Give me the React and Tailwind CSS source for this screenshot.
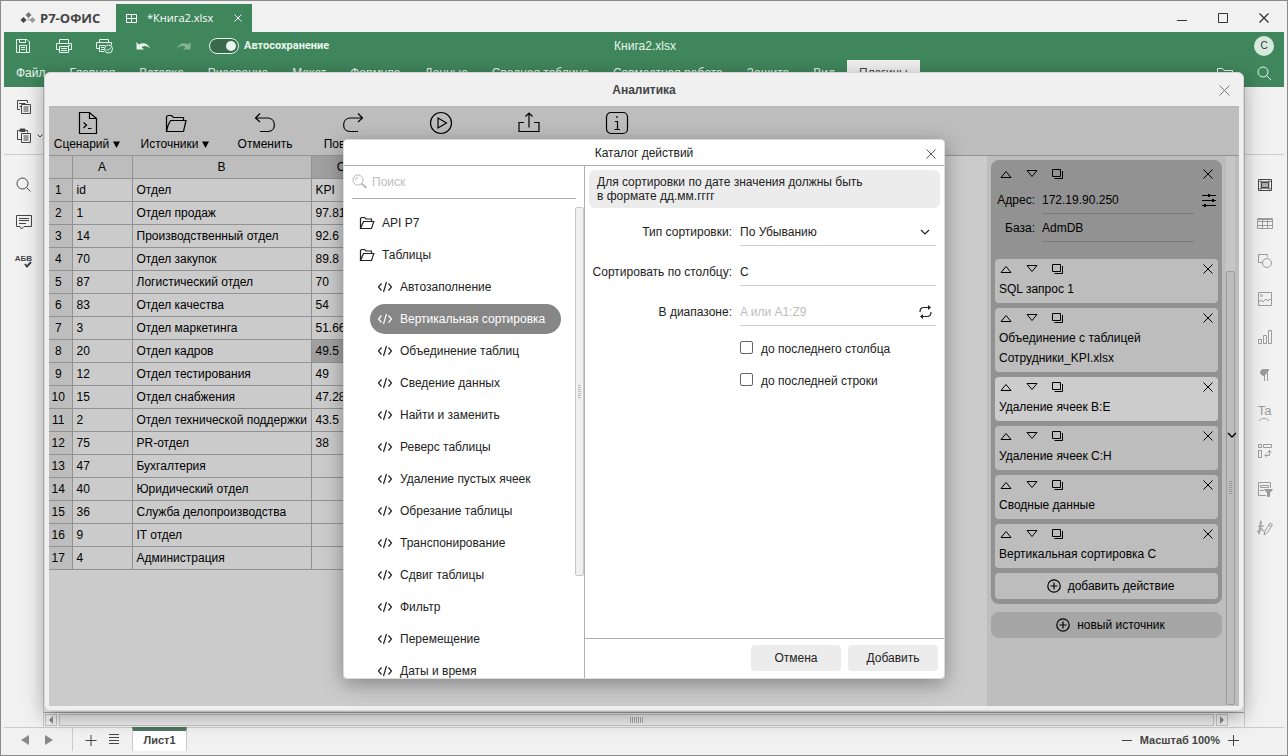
import { useState } from 'react';

const MENU_TABS = [
	'Файл',
	'Главная',
	'Вставка',
	'Рисование',
	'Макет',
	'Формула',
	'Данные',
	'Сводная таблица',
	'Совместная работа',
	'Защита',
	'Вид',
];

const ROWS = [
	['id', 'Отдел', 'KPI'],
	['1', 'Отдел продаж', '97.81'],
	['14', 'Производственный отдел', '92.6'],
	['70', 'Отдел закупок', '89.8'],
	['87', 'Логистический отдел', '70'],
	['83', 'Отдел качества', '54'],
	['3', 'Отдел маркетинга', '51.66'],
	['20', 'Отдел кадров', '49.5'],
	['12', 'Отдел тестирования', '49'],
	['15', 'Отдел снабжения', '47.28'],
	['2', 'Отдел технической поддержки', '43.5'],
	['75', 'PR-отдел', '38'],
	['47', 'Бухгалтерия', ''],
	['40', 'Юридический отдел', ''],
	['36', 'Служба делопроизводства', ''],
	['9', 'IT отдел', ''],
	['4', 'Администрация', ''],
];

const ACTIONS = [
	'Автозаполнение',
	'Вертикальная сортировка',
	'Объединение таблиц',
	'Сведение данных',
	'Найти и заменить',
	'Реверс таблицы',
	'Удаление пустых ячеек',
	'Обрезание таблицы',
	'Транспонирование',
	'Сдвиг таблицы',
	'Фильтр',
	'Перемещение',
	'Даты и время',
];

const STEPS = [
	{ title: 'SQL запрос 1' },
	{ title: 'Объединение с таблицей Сотрудники_KPI.xlsx' },
	{ title: 'Удаление ячеек B:E', light: true },
	{ title: 'Удаление ячеек C:H' },
	{ title: 'Сводные данные' },
	{ title: 'Вертикальная сортировка C' },
];

function Icon({ w = 16, h = w, sw = 1, className = '', children }) {
	return (
		<svg
			width={w}
			height={h}
			viewBox={`0 0 ${w} ${h}`}
			fill="none"
			stroke="currentColor"
			strokeWidth={sw}
			className={`shrink-0 ${className}`}
			aria-hidden="true"
		>
			{children}
		</svg>
	);
}

const CloseIcon = ({ size = 10, sw = 1, className }) => (
	<Icon w={size} sw={sw} className={className}>
		<path d={`M0.5 0.5L${size - 0.5} ${size - 0.5}M${size - 0.5} 0.5L0.5 ${size - 0.5}`} />
	</Icon>
);

const FolderIcon = () => (
	<Icon w={16} h={14} sw={1.2}>
		<path d="M1.5 12.5V2.5L2.5 1.5H5.5L7 3H12.5V5.5M1.5 12.5L4.5 5.5H14.8L12.5 12.5H1.5Z" />
	</Icon>
);

const CodeIcon = () => (
	<Icon w={16} h={12} sw={1.2}>
		<path d="M4.5 2.5L1.5 6L4.5 9.5M11.5 2.5L14.5 6L11.5 9.5M9.5 1L6.5 11" />
	</Icon>
);

const PlusCircleIcon = () => (
	<Icon w={14} sw={1.2}>
		<circle cx="7" cy="7" r="6.2" />
		<path d="M3.5 7H10.5M7 3.5V10.5" />
	</Icon>
);

const SearchIcon = ({ className }) => (
	<Icon w={16} className={className}>
		<circle cx="6" cy="6" r="5" />
		<path d="M3.5 6A2.5 2.5 0 0 1 6 3.5" />
		<path d="M9.5 9.5L14.5 14" sw={1.5} strokeWidth="2" />
	</Icon>
);

function TitleBar() {
	return (
		<div className="flex h-[31px] shrink-0 items-end">
			<div className="flex h-7 w-28 items-center gap-1 pl-4 text-[#444]">
				<svg width="16" height="12" viewBox="0 0 16 12" aria-hidden="true">
					<path d="M8.5 0L11.5 3L8.5 6L5.5 3Z" fill="#777" />
					<path d="M3.5 5L6.5 8L3.5 11L0.5 8Z" fill="#444" />
					<path d="M12.5 5L15.5 8L12.5 11L9.5 8Z" fill="#999" />
					<path d="M8.5 6L10 7.5L8.5 9L7 7.5Z" fill="#bbb" />
				</svg>
				<span className="font-['Open_Sans','Noto_Sans',sans-serif] text-[13px] leading-4 font-bold">
					Р7-ОФИС
				</span>
			</div>
			<div className="flex h-7 w-[136px] items-center bg-[#40865c] px-2.5 text-white">
				<Icon w={11} h={9} className="mr-2.5">
					<path d="M0.5 0.5H10.5V8.5H0.5ZM5.5 0.5V8.5M0.5 4.5H10.5" />
				</Icon>
				<span className="flex-1 font-['Open_Sans','Noto_Sans',sans-serif] text-[11px]">
					*Книга2.xlsx
				</span>
				<button type="button" aria-label="Закрыть вкладку">
					<CloseIcon size={8} />
				</button>
			</div>
			<div className="flex h-7 flex-1 items-center justify-end gap-[31px] pr-[15px] text-[#333]">
				<button type="button" aria-label="Свернуть">
					<Icon w={10}>
						<path d="M0 7.5H10" />
					</Icon>
				</button>
				<button type="button" aria-label="Развернуть">
					<Icon w={10}>
						<path d="M0.5 0.5H9.5V9.5H0.5Z" />
					</Icon>
				</button>
				<button type="button" aria-label="Закрыть">
					<CloseIcon sw={1.3} />
				</button>
			</div>
		</div>
	);
}

function Header() {
	return (
		<header className="shrink-0 bg-[#40865c] text-[#e8f5ec]">
			<div className="flex h-7 items-center pr-2.5 pl-3">
				<div className="flex flex-1 items-center">
					<button type="button" aria-label="Сохранить" className="w-10">
						<Icon w={14}>
							<path d="M0.5 0.5H11L13.5 3V13.5H0.5ZM3.5 13.5V6.5H10.5V13.5M3.5 0.5V3.5H9.5V0.5M5 8.5H9M5 10.5H9" />
						</Icon>
					</button>
					<button type="button" aria-label="Печать" className="w-10">
						<Icon w={16} h={14}>
							<path d="M3.5 4V0.5H12.5V4M3.5 10.5H0.5V4.5H15.5V10.5H12.5M3.5 7.5H12.5V13.5H3.5ZM12 6.5H14M5 9.5H11M5 11.5H11" />
						</Icon>
					</button>
					<button type="button" aria-label="Быстрая печать" className="w-10">
						<Icon w={18} h={16}>
							<path d="M3.5 4V1.5H12.5V4M3.5 10.5H0.5V4.5H15.5V7M3.5 13.5V7.5H9M3.5 13.5H8M5 9.5H8M5 11.5H8" />
							<circle cx="12.5" cy="11" r="4" />
							<path d="M10.5 11L12 12.5L15 9.5" />
						</Icon>
					</button>
					<button type="button" aria-label="Отменить" className="w-10">
						<Icon w={15} h={10} sw={0}>
							<path
								d="M0.5 1V8.5H8L5.5 6C8 4.5 11.5 4.5 14.5 8C12.5 2.5 7 1 3 3.5Z"
								fill="currentColor"
							/>
						</Icon>
					</button>
					<button type="button" aria-label="Повторить" className="w-[33px] opacity-40">
						<Icon w={15} h={10} sw={0}>
							<path
								d="M14.5 1V8.5H7L9.5 6C7 4.5 3.5 4.5 0.5 8C2.5 2.5 8 1 12 3.5Z"
								fill="currentColor"
							/>
						</Icon>
					</button>
					<label className="flex items-center gap-[5px] font-[Roboto,sans-serif] text-[11px] leading-4 font-bold">
						<input type="checkbox" defaultChecked className="peer sr-only" />
						<span className="flex h-4 w-[30px] items-center justify-end rounded-full border border-[#e8f5ec] bg-[#376b4b] px-0.5">
							<span className="size-2.5 rounded-full bg-[#e8f5ec]" />
						</span>
						Автосохранение
					</label>
				</div>
				<span className="text-xs">Книга2.xlsx</span>
				<div className="flex flex-1 justify-end">
					<button
						type="button"
						aria-label="Профиль"
						className="size-5 rounded-full bg-[#d5eadd] text-[10px] text-[#333]"
					>
						С
					</button>
				</div>
			</div>
			<div className="flex h-[27px] pr-3 pl-3 text-xs">
				<nav className="flex flex-1 items-center gap-6">
					{MENU_TABS.map((tab) => (
						<button key={tab} type="button" className="pb-0.5">
							{tab}
						</button>
					))}
					<button
						type="button"
						className="-ml-3 h-full bg-[#f1f1f1] px-3 pb-0.5 text-[#444]"
					>
						Плагины
					</button>
				</nav>
				<div className="flex items-center gap-6">
					<Icon w={16} h={12}>
						<path d="M0.5 11.5V0.5H5.5L7 2.5H15.5V11.5Z" />
					</Icon>
					<button type="button" aria-label="Поиск">
						<Icon w={15}>
							<circle cx="6" cy="6" r="5" />
							<path d="M9.5 9.5L14 14" />
						</Icon>
					</button>
				</div>
			</div>
		</header>
	);
}

function LeftRail() {
	return (
		<aside className="flex w-10 shrink-0 flex-col border-r border-[#cbcbcb] text-[#444]">
			<div className="flex h-17 flex-col gap-3 border-b border-[#cbcbcb] pt-[13px] pl-[13px]">
				<Icon w={15} h={16}>
					<path d="M3 9.5H0.5V0.5H10.5V3M2.5 3.5H4M2.5 6.5H4M2 3.5H8.5M4.5 4.5H13.5V13.5H4.5ZM6.5 7H11.5M6.5 9H11.5M6.5 11H11.5" />
				</Icon>
				<div className="flex items-center gap-1">
					<Icon w={16}>
						<path d="M4 11.5H0.5V2.5H2.5M8.5 2.5H10.5V4.5" />
						<path d="M3 1H8V3.5H3Z" fill="currentColor" />
						<path d="M4.5 5.5H13.5V14.5H4.5ZM6.5 8H11.5M6.5 10H11.5M6.5 12H11.5" />
					</Icon>
					<Icon w={6} h={4}>
						<path d="M0.5 0.5L3 3L5.5 0.5" />
					</Icon>
				</div>
			</div>
			<div className="flex flex-col items-center gap-[23px] pt-[22px]">
				<Icon w={15}>
					<circle cx="6.5" cy="6.5" r="5.5" />
					<path d="M10.5 10.5L14.5 14.5" />
				</Icon>
				<Icon w={16} h={15}>
					<path d="M0.5 0.5H15.5V11.5H8L5.5 14L4 11.5H0.5ZM3 3.5H13M3 5.5H13M3 8.5H10" />
				</Icon>
				<div className="relative">
					<span className="block text-[8px] leading-3 font-bold">АБВ</span>
					<Icon w={8} h={7} sw={2} className="absolute top-2 right-0">
						<path d="M1 3L3 5.5L7 1" />
					</Icon>
				</div>
			</div>
		</aside>
	);
}

function RightRail() {
	return (
		<aside className="flex w-10 shrink-0 flex-col border-l border-[#cbcbcb] text-[#9b9b9b]">
			<div className="h-17 border-b border-[#cbcbcb]" />
			<div className="flex flex-col items-center gap-[22px] pt-[22px]">
				<Icon w={16} className="text-[#444]">
					<path d="M1.5 2.5H14.5V13.5H1.5Z" />
					<path d="M1.5 4.5H14.5M1.5 11.5H14.5M4 2.5V13.5M12 2.5V13.5" opacity="0.6" />
					<path d="M4.5 5.5H11.5V10.5H4.5Z" fill="#aaa" />
				</Icon>
				<Icon w={16}>
					<path d="M0.5 3.5H15.5V13.5H0.5ZM0.5 6.5H15.5M0.5 10.5H15.5M5.5 3.5V13.5M10.5 3.5V13.5M0.5 4.5H15.5" />
				</Icon>
				<Icon w={16}>
					<path d="M5 9.5H1.5V1.5H10.5V4" />
					<circle cx="10" cy="10" r="4.5" />
				</Icon>
				<Icon w={16}>
					<path d="M1.5 1.5H14.5V14.5H1.5ZM1.5 11L4 9L6 11L9 8L11 10L13 8L14.5 9.5" />
					<circle cx="4.5" cy="4.5" r="1" />
				</Icon>
				<Icon w={16}>
					<path d="M1.5 10.5H4.5V14.5H1.5ZM6.5 6.5H9.5V14.5H6.5ZM11.5 1.5H14.5V14.5H11.5Z" />
				</Icon>
				<Icon w={16}>
					<path d="M12 2.5H7C4 2.5 3.5 4 3.5 5.5C3.5 7 5 8.5 7.5 8.5Z" fill="currentColor" />
					<path d="M7.5 2.5V14M10.5 2.5V14" />
				</Icon>
				<div className="flex h-4 flex-col items-center">
					<span className="text-[13px] leading-3">Ta</span>
					<Icon w={12} h={4}>
						<path d="M1 4C3.5 0.5 8.5 0.5 11 4" />
					</Icon>
				</div>
				<Icon w={16}>
					<path d="M1.5 1.5H4.5V4.5H1.5ZM6.5 1.5H14.5V4.5H6.5ZM1.5 7.5H4.5V14.5H1.5Z" />
					<path d="M8 12.5H12.5V7.5M10 10.5L8 12.5L10 14.5M10.5 9.5L12.5 7.5L14.5 9.5" />
				</Icon>
				<Icon w={16}>
					<path d="M9 14.5H1.5V1.5H13.5V7M3.5 4.5H11.5V6.5H3.5ZM3 9.5H7" />
					<path d="M7.5 8.5H15.5L12.5 12V15.5H10.5V12Z" fill="currentColor" />
				</Icon>
				<Icon w={18} h={17}>
					<path d="M1 12C4 14 4 3 4.5 2C6 0 5 9 4 13C3 17 1.5 14 3 12C5 9 7 9 6.5 11C6 13 8 12 8 11M2 7C4 8 7 7 8 7" />
					<path d="M8 16L9 12L14 4L16.5 5.5L11.5 13.5ZM13 6L15.5 7.5" />
				</Icon>
			</div>
		</aside>
	);
}

function Workspace() {
	return (
		<div className="flex min-h-0 flex-1">
			<LeftRail />
			<div className="flex min-w-0 flex-1 flex-col justify-end">
				<div className="h-1 border-b border-[#a5a5a5]" />
				<div className="flex h-[14px] items-center justify-between gap-0.5 pr-4 pl-px text-[#888]">
					<button
						type="button"
						aria-label="Прокрутить влево"
						className="flex size-3 items-center justify-center border border-[#c4c4c4]"
					>
						<Icon w={4} h={8} sw={0}>
							<path d="M4 0V8L0 4Z" fill="currentColor" />
						</Icon>
					</button>
					<div className="flex h-3 flex-1 items-center justify-center gap-px border border-[#c4c4c4] bg-[#ededed]">
						<Icon w={14} h={6} className="text-[#aaa]">
							<path d="M0.5 0V6M2.5 0V6M4.5 0V6M6.5 0V6M8.5 0V6M10.5 0V6M12.5 0V6" />
						</Icon>
					</div>
					<button
						type="button"
						aria-label="Прокрутить вправо"
						className="flex size-3 items-center justify-center border border-[#c4c4c4]"
					>
						<Icon w={4} h={8} sw={0}>
							<path d="M0 0V8L4 4Z" fill="currentColor" />
						</Icon>
					</button>
				</div>
			</div>
			<RightRail />
		</div>
	);
}

function StatusBar() {
	return (
		<footer className="flex h-7 shrink-0 items-stretch border-t border-[#cbcbcb] pb-1 text-[#444]">
			<div className="flex w-[69px] items-center gap-4 border-r border-[#cbcbcb] pl-[17px] text-[#888]">
				<button type="button" aria-label="Предыдущий лист">
					<Icon w={8} h={10} sw={0}>
						<path d="M8 0V10L0 5Z" fill="currentColor" />
					</Icon>
				</button>
				<button type="button" aria-label="Следующий лист">
					<Icon w={8} h={10} sw={0}>
						<path d="M0 0V10L8 5Z" fill="currentColor" />
					</Icon>
				</button>
			</div>
			<div className="flex w-[59px] items-center gap-3 pl-3">
				<button type="button" aria-label="Добавить лист">
					<Icon w={12}>
						<path d="M0.5 6.5H11.5M6 1V12" />
					</Icon>
				</button>
				<button type="button" aria-label="Список листов">
					<Icon w={10} h={11}>
						<path d="M0 0.5H10M0 3.5H10M0 6.5H10M0 9.5H10" />
					</Icon>
				</button>
			</div>
			<button
				type="button"
				className="-mt-px w-[55px] border-x border-t-4 border-x-[#cbcbcb] border-t-[#4d7660] bg-white pb-0.5 text-[11px] font-bold"
			>
				Лист1
			</button>
			<div className="flex flex-1 items-center justify-end gap-2 pr-[45px] text-[11px] font-bold">
				<button type="button" aria-label="Уменьшить">
					<Icon w={10} h={12}>
						<path d="M0 6.5H10" />
					</Icon>
				</button>
				<span>Масштаб 100%</span>
				<button type="button" aria-label="Увеличить">
					<Icon w={11} h={12}>
						<path d="M0 6.5H11M5.5 1V12" />
					</Icon>
				</button>
			</div>
		</footer>
	);
}

function ToolButton({ label, title, arrow, className = 'w-22', children }) {
	return (
		<button
			type="button"
			aria-label={title}
			className={`flex h-12 shrink-0 flex-col items-center whitespace-nowrap ${className}`}
		>
			<span className="flex h-[31px] items-center">
				<Icon w={24} sw={1.2}>
					{children}
				</Icon>
			</span>
			<span className="flex items-center gap-1 leading-3">
				{label}
				{arrow && (
					<Icon w={7} sw={0}>
						<path d="M0 0.5H7L3.5 7Z" fill="currentColor" />
					</Icon>
				)}
			</span>
		</button>
	);
}

function Toolbar() {
	return (
		<div className="flex h-12 shrink-0 bg-[#bdbdbd]">
			<ToolButton label="Сценарий" arrow className="mr-1 w-20 pr-1">
				<path d="M4.5 1.5H14.5L21.5 7.5V22.5H4.5ZM14.5 1.5V7.5H21.5M8.5 11.5L11.5 14L8.5 17M13 17.5H16.5" />
			</ToolButton>
			<ToolButton label="Источники" arrow className="w-22 pr-1">
				<path d="M3.5 20.5V5.5L5 4.5H8.5L10.5 6.5H20.5V9.5M3.5 20.5H20.5L23 9.5H7.5L5 14.5L3.5 20.5Z" />
			</ToolButton>
			<ToolButton label="Отменить">
				<path d="M7 2.5L2.5 7L7 11M2.5 7H15C23.5 7.5 23.5 20.5 15 20.5H7" />
			</ToolButton>
			<ToolButton label="Повторить">
				<path d="M17 2.5L21.5 7L17 11M21.5 7H9C0.5 7.5 0.5 20.5 9 20.5H17" />
			</ToolButton>
			<ToolButton title="Запустить">
				<circle cx="12" cy="12" r="10.5" />
				<path d="M9 7L17.5 12L9 17Z" />
			</ToolButton>
			<ToolButton title="Экспорт">
				<path d="M7 11.5H2V20.5H22V11.5H17M12 16.5V2M8.5 5.5L12 2L15.5 5.5" />
			</ToolButton>
			<ToolButton title="Справка">
				<rect x="1.5" y="1.5" width="21" height="21" rx="4.5" />
				<path d="M12 5V7M10 10.5H12.5V18.5M9.5 18.5H15" />
			</ToolButton>
		</div>
	);
}

function Sheet() {
	return (
		<table className="w-[322px] table-fixed border-collapse">
			<thead>
				<tr className="h-[22px] bg-[#bdbdbd]">
					<th className="w-[23px] border-r border-b border-[#929292]" />
					<th className="w-[60px] border border-t-0 border-[#929292] font-normal">A</th>
					<th className="w-[179px] border border-t-0 border-[#929292] font-normal">B</th>
					<th className="w-[60px] border border-t-0 border-[#929292] bg-[#a0a0a0] font-normal">
						C
					</th>
				</tr>
			</thead>
			<tbody>
				{ROWS.map((row, i) => (
					<tr key={row[0]} className="h-[23px]">
						<th
							scope="row"
							className="border-r border-b border-[#929292] bg-[#bdbdbd] p-0 pr-1 font-normal"
						>
							{i + 1}
						</th>
						{row.map((cell, j) => (
							<td
								key={j}
								className={`border border-[#929292] p-0 pl-1 whitespace-nowrap ${
									i === 7 && j === 2 ? 'bg-[#a0a0a0]' : ''
								}`}
							>
								{cell}
							</td>
						))}
					</tr>
				))}
			</tbody>
		</table>
	);
}

function StepControls({ name }) {
	return (
		<div className="flex h-5 items-center px-[5px]">
			<button type="button" aria-label={`Выше: ${name}`} className="w-[26px]">
				<Icon w={12} h={8}>
					<path d="M1 7.5L6 1.5L11 7.5Z" />
				</Icon>
			</button>
			<button type="button" aria-label={`Ниже: ${name}`} className="w-[26px]">
				<Icon w={12} h={8}>
					<path d="M1 0.5L6 6.5L11 0.5Z" />
				</Icon>
			</button>
			<button type="button" aria-label={`Копировать: ${name}`} className="flex-1">
				<Icon w={11} h={10}>
					<path d="M0.5 0.5H8.5V7.5H0.5ZM10.5 2V9.5H2.5" />
				</Icon>
			</button>
			<button type="button" aria-label={`Удалить: ${name}`}>
				<CloseIcon />
			</button>
		</div>
	);
}

function SourcePanel() {
	return (
		<aside className="flex w-[252px] shrink-0 bg-[#bdbdbd] pr-1">
			<div className="min-w-0 flex-1 pt-1 pl-1">
				<section className="rounded-lg bg-[#929292] px-1 pt-1 pb-[5px]">
					<StepControls name="источник" />
					<div className="flex h-8 items-center pr-0.5">
						<label htmlFor="address" className="w-10 text-right">
							Адрес:
						</label>
						<input
							id="address"
							defaultValue="172.19.90.250"
							className="mr-2 ml-[7px] h-[27px] w-0 flex-1 border-b border-[#7a7a7a] outline-none"
						/>
						<button type="button" aria-label="Параметры">
							<Icon w={14} sw={1.2}>
								<path d="M0 2.5H14M0 7.5H14M0 12.5H14" />
								<path d="M7 1V4M11 6V9M3 11V14" strokeWidth="2" />
							</Icon>
						</button>
					</div>
					<div className="flex h-6 items-center pr-[22px]">
						<label htmlFor="base" className="w-10 text-right">
							База:
						</label>
						<input
							id="base"
							defaultValue="AdmDB"
							className="mr-0.5 ml-[7px] h-[27px] w-0 flex-1 border-b border-[#7a7a7a] outline-none"
						/>
					</div>
					<div className="mt-[19px] flex flex-col gap-[5px]">
						{STEPS.map((step) => (
							<article
								key={step.title}
								className={`rounded pb-1 ${step.light ? 'bg-[#cccccc]' : 'bg-[#bdbdbd]'}`}
							>
								<StepControls name={step.title} />
								<p className="pr-12 pl-1 leading-5">{step.title}</p>
							</article>
						))}
						<button
							type="button"
							className="flex h-[26px] items-center justify-center gap-[7px] rounded bg-[#bdbdbd] pl-2"
						>
							<PlusCircleIcon />
							добавить действие
						</button>
					</div>
				</section>
				<button
					type="button"
					className="mt-2 flex h-[26px] w-full items-center justify-center gap-[7px] rounded-lg bg-[#a6a6a6] pl-2"
				>
					<PlusCircleIcon />
					новый источник
				</button>
			</div>
			<div className="ml-1 flex w-[9px] flex-col bg-[#c6c6c6] pt-[115px] pb-px">
				<div className="relative flex flex-1 items-center justify-center rounded-xs border border-[#9c9c9c] bg-[#bdbdbd]">
					<Icon w={3} h={14} className="text-[#999]">
						<path d="M0 0.5H3M0 2.5H3M0 4.5H3M0 6.5H3M0 8.5H3M0 10.5H3M0 12.5H3" />
					</Icon>
					<Icon w={10} h={6} sw={1.4} className="absolute top-[160px] left-0">
						<path d="M1 1L5 5L9 1" />
					</Icon>
				</div>
			</div>
		</aside>
	);
}

function AnalyticsWindow() {
	return (
		<section className="absolute inset-x-[43px] top-[71px] bottom-11 flex flex-col rounded-md border border-[#d5d5d5] bg-[#f0f0f0] px-1 pb-1 shadow-[0_5px_20px_rgba(0,0,0,0.35)]">
			<div className="flex h-[33px] shrink-0 items-center pt-px pr-[9px] pl-5">
				<h1 className="flex-1 text-center text-xs font-bold text-[#444]">Аналитика</h1>
				<button type="button" aria-label="Закрыть Аналитику" className="text-[#777]">
					<CloseIcon size={11} />
				</button>
			</div>
			<div className="flex min-h-0 flex-1 flex-col border-t border-[#b5b5b5] bg-[#cbcbcb] text-xs text-black">
				<Toolbar />
				<div className="flex min-h-0 flex-1 border-t border-[#929292]">
					<div className="min-w-0 flex-1 overflow-hidden">
						<Sheet />
					</div>
					<SourcePanel />
				</div>
			</div>
		</section>
	);
}

function ActionTree({ selected, onSelect }) {
	return (
		<div className="flex w-[241px] shrink-0 flex-col overflow-hidden border-r border-[#b0b0b0]">
			<div className="mx-2 flex h-[33px] shrink-0 items-center gap-1 border-b border-[#b0b0b0]">
				<SearchIcon className="text-[#bbb]" />
				<input
					type="search"
					aria-label="Поиск"
					placeholder="Поиск"
					className="min-w-0 flex-1 outline-none placeholder:text-[#bdbdbd]"
				/>
			</div>
			<div className="flex min-h-0 flex-1 pt-2">
				<div className="min-w-0 flex-1 overflow-hidden">
					{['API Р7', 'Таблицы'].map((folder) => (
						<button
							key={folder}
							type="button"
							className="flex h-8 w-full items-center gap-[7px] pl-[15px]"
						>
							<FolderIcon />
							{folder}
						</button>
					))}
					{ACTIONS.map((action) => (
						<div key={action} className="flex h-8 items-center pl-[26px]">
							<button
								type="button"
								onClick={() => onSelect(action)}
								className={`flex h-[30px] items-center gap-[7px] rounded-full pr-4 pl-[7px] whitespace-nowrap ${
									selected === action ? 'bg-[#868686] text-white' : ''
								}`}
							>
								<CodeIcon />
								{action}
							</button>
						</div>
					))}
				</div>
				<div className="flex h-[369px] w-[9px] shrink-0 items-center justify-center rounded-xs border border-[#c8c8c8] bg-[#f0f0f0]">
					<Icon w={3} h={14} className="text-[#bbb]">
						<path d="M0 0.5H3M0 2.5H3M0 4.5H3M0 6.5H3M0 8.5H3M0 10.5H3M0 12.5H3" />
					</Icon>
				</div>
			</div>
		</div>
	);
}

function ActionForm() {
	return (
		<form
			className="flex min-w-0 flex-1 flex-col"
			onSubmit={(e) => e.preventDefault()}
		>
			<div className="flex-1 px-1 pt-1">
				<p className="rounded-md bg-[#ececec] px-2 py-[5px] leading-[14px]">
					Для сортировки по дате значения должны быть
					<br />в формате дд.мм.гггг
				</p>
				<div className="grid grid-cols-[143px_1fr] items-center gap-x-2 gap-y-3 pt-2.5 pr-1">
					<label htmlFor="sort-type" className="text-right">
						Тип сортировки:
					</label>
					<div className="flex h-7 items-center border-b border-[#cfcfcf] pr-1.5">
						<select id="sort-type" className="min-w-0 flex-1 appearance-none outline-none">
							<option>По Убыванию</option>
							<option>По Возрастанию</option>
						</select>
						<Icon w={10} h={6} sw={1.2} className="pointer-events-none">
							<path d="M1 1L5 5L9 1" />
						</Icon>
					</div>
					<label htmlFor="sort-column" className="text-right whitespace-nowrap">
						Сортировать по столбцу:
					</label>
					<input
						id="sort-column"
						defaultValue="C"
						className="h-7 w-full border-b border-[#cfcfcf] outline-none"
					/>
					<label htmlFor="sort-range" className="text-right">
						В диапазоне:
					</label>
					<div className="flex h-7 items-center border-b border-[#cfcfcf] pr-1">
						<input
							id="sort-range"
							placeholder="A или A1:Z9"
							className="min-w-0 flex-1 outline-none placeholder:text-[#bdbdbd]"
						/>
						<button type="button" aria-label="Обновить диапазон">
							<Icon w={13} h={14} sw={1.2}>
								<path d="M1 7C1 4 2 2.5 5 2.5H10M12 7C12 10 11 11.5 8 11.5H3" />
								<path d="M9 0L12 2.5L9 5ZM4 9L1 11.5L4 14Z" fill="currentColor" strokeWidth="0" />
							</Icon>
						</button>
					</div>
				</div>
				<div className="flex flex-col pt-[7px] pl-[151px]">
					<label className="flex h-8 items-center gap-2">
						<input
							type="checkbox"
							className="mb-1 size-[13px] appearance-none rounded-xs border border-[#666] bg-white checked:bg-[#666]"
						/>
						до последнего столбца
					</label>
					<label className="flex h-8 items-center gap-2">
						<input
							type="checkbox"
							className="mb-1 size-[13px] appearance-none rounded-xs border border-[#666] bg-white checked:bg-[#666]"
						/>
						до последней строки
					</label>
				</div>
			</div>
			<div className="flex h-10 items-center justify-end gap-[7px] border-t border-[#b0b0b0] pr-1.5 pb-0.5">
				<button type="button" className="h-[26px] w-[90px] rounded bg-[#ececec]">
					Отмена
				</button>
				<button type="submit" className="h-[26px] w-[90px] rounded bg-[#ececec]">
					Добавить
				</button>
			</div>
		</form>
	);
}

function CatalogDialog() {
	const [selected, setSelected] = useState('Вертикальная сортировка');

	return (
		<section
			role="dialog"
			aria-labelledby="catalog-title"
			className="absolute top-[138px] left-1/2 flex h-[540px] w-[602px] -translate-x-1/2 flex-col overflow-hidden rounded border border-[#dcdcdc] bg-white text-xs text-[#222] shadow-[0_5px_20px_rgba(0,0,0,0.35)]"
		>
			<div className="flex h-[26px] shrink-0 items-center border-b border-[#b0b0b0] pr-2 pl-[18px]">
				<h2 id="catalog-title" className="flex-1 text-center">
					Каталог действий
				</h2>
				<button type="button" aria-label="Закрыть каталог" className="mt-0.5 text-[#555]">
					<CloseIcon />
				</button>
			</div>
			<div className="flex min-h-0 flex-1">
				<ActionTree selected={selected} onSelect={setSelected} />
				<ActionForm />
			</div>
		</section>
	);
}

export default function App() {
	return (
		<div className="relative flex h-screen flex-col overflow-hidden border border-[#8a8a8a] bg-[#f1f1f1] px-[3px] font-['Liberation_Sans',Arial,sans-serif] leading-4">
			<TitleBar />
			<Header />
			<Workspace />
			<StatusBar />
			<AnalyticsWindow />
			<CatalogDialog />
		</div>
	);
}
